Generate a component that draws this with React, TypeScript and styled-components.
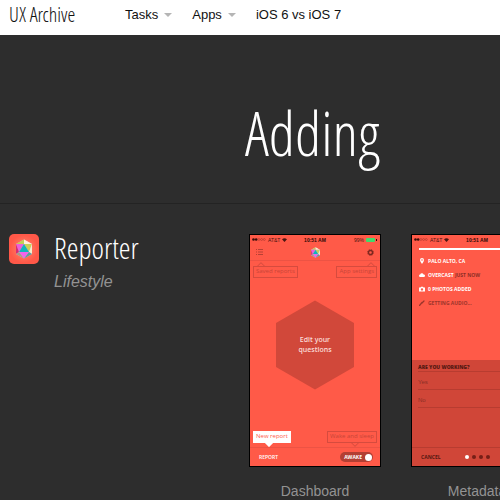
import React from "react";
import styled, { createGlobalStyle } from "styled-components";

const condensed = `"Open Sans Condensed Light", "OpenSans-CondensedLight", "Open Sans Condensed", "Open Sans", sans-serif`;
const sans = `"Liberation Sans", Arial, sans-serif`;

const GlobalStyle = createGlobalStyle`
  *, *::before, *::after { box-sizing: border-box; }
  body { margin: 0; background: #2d2d2d; font-family: ${sans}; overflow-x: hidden; }
  h1, h2, p, figure, ul { margin: 0; padding: 0; }
`;

const Header = styled.header`
  display: flex;
  align-items: center;
  height: 35px;
  padding: 0 9px 5px;
  background: #fff;
`;

const Brand = styled.a`
  width: 116px;
  font: 300 20px/30px ${condensed};
  color: #111;
  text-decoration: none;
  white-space: nowrap;
`;

const Nav = styled.nav`
  display: flex;
  gap: 20px;
`;

const NavLink = styled.a`
  display: flex;
  align-items: center;
  gap: 6px;
  font-size: 13px;
  line-height: 30px;
  color: #111;
  text-decoration: none;
  white-space: nowrap;
`;

const Caret = styled.span`
  border: 4px solid transparent;
  border-top-color: #b5b5b5;
  border-bottom: 0;
`;

const Hero = styled.div`
  height: 169px;
  padding: 56px 0 0 245px;
  border-bottom: 1px solid #232323;
`;

const Title = styled.h1`
  font: 300 60px/84px ${condensed};
  color: #fff;
`;

const Section = styled.section`
  display: flex;
  padding: 30px 0 16px 9px;
  overflow: hidden;
`;

const AppInfo = styled.div`
  display: flex;
  gap: 15px;
  flex: 0 0 240px;
`;

const AppName = styled.h2`
  font: 300 30px/28px ${condensed};
  color: #fff;
`;

const Category = styled.p`
  margin-top: 10px;
  font-size: 16px;
  line-height: 20px;
  font-style: italic;
  color: #939393;
`;

const Gallery = styled.div`
  display: flex;
  gap: 30px;
`;

const Shot = styled.figure`
  flex: 0 0 132px;
`;

const Caption = styled.figcaption`
  padding-top: 14px;
  font-size: 14px;
  line-height: 20px;
  text-align: center;
  color: #939393;
`;

const Screen = styled.div`
  display: flex;
  flex-direction: column;
  height: 233px;
  border: 1px solid #000;
  background: #ff5a48;
  font: 400 6px/8px "Open Sans", sans-serif;
  color: #fff;
`;

const Status = styled.div`
  display: grid;
  grid-template-columns: 1fr auto 1fr;
  align-items: center;
  height: 9px;
  padding: 0 2px;
  font-family: ${sans};
  font-size: 5px;
  color: #4b1611;
`;

const StatusGroup = styled.div<{ $end?: boolean }>`
  display: flex;
  align-items: center;
  justify-content: ${(p) => (p.$end ? "flex-end" : "flex-start")};
  gap: 2px;
`;

const Clock = styled.span`
  font-weight: 700;
  color: #2d0906;
`;

const Toolbar = styled.div`
  display: flex;
  align-items: center;
  justify-content: space-between;
  height: 17px;
  padding: 0 6px;
  border-bottom: 1px solid #ed5344;
`;

const IconButton = styled.button`
  display: flex;
  padding: 0;
  border: 0;
  background: none;
  color: #7d2820;
`;

const Tips = styled.div`
  display: flex;
  justify-content: space-between;
  padding: 5px 3px 0;
`;

const Tip = styled.span<{ $solid?: boolean; $down?: boolean; $arrow: string }>`
  position: relative;
  height: 12px;
  padding: 0 2px;
  border: 1px solid ${(p) => (p.$solid ? "#fff" : "#d64b3e")};
  background: ${(p) => (p.$solid ? "#fff" : "#ff5a48")};
  color: ${(p) => (p.$solid ? "#ff5a48" : "#c94538")};
  line-height: 9px;
  white-space: nowrap;
  &::after {
    content: "";
    position: absolute;
    left: ${(p) => p.$arrow};
    ${(p) => (p.$down ? "bottom" : "top")}: -4px;
    width: 6px;
    height: 6px;
    background: inherit;
    border: 1px solid ${(p) => (p.$solid ? "#fff" : "#d64b3e")};
    clip-path: ${(p) => (p.$down ? "polygon(100% 0, 100% 100%, 0 100%)" : "polygon(0 0, 100% 0, 0 100%)")};
    transform: rotate(45deg);
  }
`;

const Question = styled.div`
  display: grid;
  place-items: center;
  margin-top: 22px;
  font-size: 7px;
  font-weight: 600;
  line-height: 10px;
  text-align: center;
  color: #fbdcd8;
  > * { grid-area: 1 / 1; }
`;

const Spacer = styled.div`
  flex: 1;
`;

const Footer = styled.div`
  display: flex;
  align-items: center;
  justify-content: space-between;
  height: 19px;
  margin-top: 4px;
  padding: 0 7px 0 9px;
  border-top: 1px solid #ed5344;
  font-size: 5px;
  font-weight: 600;
`;

const Toggle = styled.button`
  display: flex;
  align-items: center;
  gap: 3px;
  height: 10px;
  padding: 0 1px 0 4px;
  border: 0;
  border-radius: 5px;
  background: #b33f33;
  color: #fff;
  font: 700 5px/8px "Open Sans", sans-serif;
`;

const Knob = styled.span`
  width: 7px;
  height: 7px;
  border-radius: 50%;
  background: #fff;
`;

const Progress = styled.div`
  height: 2px;
  margin: 4px 0 4px 7px;
  background: #fff;
`;

const Facts = styled.ul`
  list-style: none;
`;

const Fact = styled.li<{ $dim?: boolean }>`
  display: flex;
  align-items: center;
  gap: 3px;
  height: 14px;
  padding-left: 7px;
  color: ${(p) => (p.$dim ? "#9c352b" : "#fff")};
  font-size: 5px;
  font-weight: 700;
`;

const Muted = styled.span`
  color: #8f2f26;
`;

const Panel = styled.div`
  display: flex;
  flex-direction: column;
  flex: 1;
  margin-top: 50px;
  background: #d04638;
  color: #551812;
`;

const PanelTitle = styled.div`
  height: 12px;
  margin-left: 6px;
  padding-top: 3px;
  border-bottom: 1px solid #b83c30;
  font-size: 5px;
  font-weight: 800;
`;

const Answer = styled.div`
  height: 18px;
  margin-left: 6px;
  padding-top: 6px;
  border-bottom: 1px solid #b83c30;
  font-family: ${sans};
  color: #8c2f26;
`;

const PanelFooter = styled.div`
  display: flex;
  align-items: center;
  gap: 24px;
  height: 19px;
  padding-left: 9px;
  border-top: 1px solid #b83c30;
  font-size: 5px;
  font-weight: 700;
`;

const Dots = styled.div`
  display: flex;
  gap: 3px;
`;

const Dot = styled.span<{ $on?: boolean }>`
  width: 4px;
  height: 4px;
  border-radius: 50%;
  background: ${(p) => (p.$on ? "#fff" : "#751f17")};
`;

const Gem = ({ size }: { size: number }) => (
  <svg width={size} height={size} viewBox="0 0 20 20" aria-hidden="true">
    <path d="M10 0.500 L2 5 V15 L10 19.500 L18 15 V5z" fill="#e9a6d2" />
    <path d="M10 0.500 L18 5 L10 5z" fill="#fff0dc" />
    <path d="M2 5 L10 0.500 V5z" fill="#c3cf55" />
    <path d="M10 5 L18 5 L15 13z" fill="#c9cf58" />
    <path d="M18 5 V15 L15 13z" fill="#f3efcf" />
    <path d="M10 5 L2 5 L5 13z" fill="#ec5fdc" />
    <path d="M2 5 V15 L5 13z" fill="#d42c74" />
    <path d="M10 5 L15 13 H5z" fill="#10b5bb" />
    <path d="M5 13 H15 L10 19.500z" fill="#f264ea" />
    <path d="M15 13 L18 15 L10 19.500z" fill="#5c9c9a" />
    <path d="M5 13 L2 15 L10 19.500z" fill="#a79b86" />
  </svg>
);

const AppIcon = () => (
  <svg width="30" height="30" viewBox="0 0 30 30" aria-hidden="true">
    <defs>
      <radialGradient id="glow">
        <stop offset="0.300" stopColor="#ff7d64" />
        <stop offset="1" stopColor="#ff5848" />
      </radialGradient>
    </defs>
    <rect width="30" height="30" rx="5" fill="#ff5848" />
    <circle cx="15" cy="15" r="14" fill="url(#glow)" />
    <svg x="5" y="5" width="20" height="20"><Gem size={20} /></svg>
  </svg>
);

const Signal = () => (
  <svg width="14" height="3" viewBox="0 0 14 3" aria-hidden="true">
    {[0, 1, 2, 3, 4].map((i) => (
      <circle key={i} cx={1.5 + i * 2.7} cy="1.5" r={i < 2 ? 1.3 : 1} fill={i < 2 ? "#3a0d09" : "none"} stroke="#a3392e" strokeWidth={i < 2 ? 0 : 0.5} />
    ))}
  </svg>
);

const Wifi = () => (
  <svg width="5" height="4" viewBox="0 0 5 4" aria-hidden="true">
    <path d="M0 1.300 Q2.500 -1 5 1.300 L2.500 4z" fill="#4b1611" />
  </svg>
);

const Battery = () => (
  <svg width="12" height="4" viewBox="0 0 12 4" aria-hidden="true">
    <rect width="9" height="4" rx="1" fill="#3fdc6c" />
    <path d="M10 1h1v2h-1z" fill="#2d0906" />
  </svg>
);

const StatusBar = ({ battery }: { battery?: boolean }) => (
  <Status>
    <StatusGroup><Signal /><span>AT&amp;T</span><Wifi /></StatusGroup>
    <Clock>10:51 AM</Clock>
    <StatusGroup $end>{battery && <><span>99%</span><Battery /></>}</StatusGroup>
  </Status>
);

const factIcons: Record<string, React.ReactNode> = {
  pin: <path fillRule="evenodd" d="M3 0a2 2 0 0 1 2 2Q5 3.500 3 6Q1 3.500 1 2a2 2 0 0 1 2-2zM3 1.200a.8.8 0 1 0 0 1.600a.8.8 0 1 0 0-1.600z" />,
  cloud: <path d="M1.200 5a1.200 1.200 0 0 1 0-2.400a1.800 1.800 0 0 1 3.400-.2a1.300 1.300 0 0 1 .2 2.600z" />,
  camera: <path fillRule="evenodd" d="M0 1.500h1.500L2 .7h2l.5.8H6v4H0zM3 2.200a1.200 1.200 0 1 0 0 2.400a1.200 1.200 0 1 0 0-2.400z" />,
  mic: <path d="M.5 5.500L3 2.500M3 3L5 1" stroke="currentColor" strokeWidth="1.200" strokeLinecap="round" />,
};

const FactIcon = ({ name }: { name: string }) => (
  <svg width="6" height="6" viewBox="0 0 6 6" fill="currentColor" aria-hidden="true">{factIcons[name]}</svg>
);

const DashboardScreen = () => (
  <Screen>
    <StatusBar battery />
    <Toolbar>
      <IconButton aria-label="Saved reports">
        <svg width="7" height="6" viewBox="0 0 7 6"><path d="M0 .5h1M2 .5h5M0 3h1M2 3h5M0 5.500h1M2 5.500h5" stroke="#b84034" /></svg>
      </IconButton>
      <Gem size={11} />
      <IconButton aria-label="App settings">
        <svg width="7" height="7" viewBox="0 0 7 7"><circle cx="3.500" cy="3.500" r="2" fill="none" stroke="currentColor" strokeWidth="1.400" /><circle cx="3.500" cy="3.500" r="3" fill="none" stroke="currentColor" strokeWidth=".8" strokeDasharray="1.200 1.150" /></svg>
      </IconButton>
    </Toolbar>
    <Tips>
      <Tip $arrow="4px">Saved reports</Tip>
      <Tip $arrow="31px">App settings</Tip>
    </Tips>
    <Question>
      <svg width="78" height="90" viewBox="0 0 78 90" aria-hidden="true"><path d="M39 0.500L78 23V67L39 89.500L0 67V23z" fill="#d1483a" /></svg>
      <span>Edit your<br />questions</span>
    </Question>
    <Spacer />
    <Tips>
      <Tip $solid $down $arrow="12px">New report</Tip>
      <Tip $down $arrow="24px">Wake and sleep</Tip>
    </Tips>
    <Footer>
      <span>REPORT</span>
      <Toggle>AWAKE<Knob /></Toggle>
    </Footer>
  </Screen>
);

const MetadataScreen = () => (
  <Screen>
    <StatusBar />
    <Progress />
    <Facts>
      <Fact><FactIcon name="pin" />PALO ALTO, CA</Fact>
      <Fact><FactIcon name="cloud" /><span>OVERCAST <Muted>JUST NOW</Muted></span></Fact>
      <Fact><FactIcon name="camera" />0 PHOTOS ADDED</Fact>
      <Fact $dim><FactIcon name="mic" />GETTING AUDIO...</Fact>
    </Facts>
    <Panel>
      <PanelTitle>ARE YOU WORKING?</PanelTitle>
      <Answer>Yes</Answer>
      <Answer>No</Answer>
      <Spacer />
      <PanelFooter>
        <span>CANCEL</span>
        <Dots><Dot $on /><Dot /><Dot /><Dot /></Dots>
      </PanelFooter>
    </Panel>
  </Screen>
);

export default function App() {
  return (
    <>
      <GlobalStyle />
      <Header>
        <Brand href="#">UX Archive</Brand>
        <Nav>
          <NavLink href="#tasks">Tasks <Caret /></NavLink>
          <NavLink href="#apps">Apps <Caret /></NavLink>
          <NavLink href="#compare">iOS 6 vs iOS 7</NavLink>
        </Nav>
      </Header>
      <main>
        <Hero><Title>Adding</Title></Hero>
        <Section>
          <AppInfo>
            <AppIcon />
            <div>
              <AppName>Reporter</AppName>
              <Category>Lifestyle</Category>
            </div>
          </AppInfo>
          <Gallery>
            <Shot><DashboardScreen /><Caption>Dashboard</Caption></Shot>
            <Shot><MetadataScreen /><Caption>Metadata</Caption></Shot>
          </Gallery>
        </Section>
      </main>
    </>
  );
}
